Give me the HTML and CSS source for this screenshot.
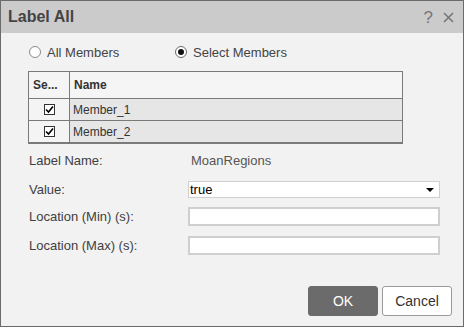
FILE: index.html
```html
<!DOCTYPE html>
<html>
<head>
<meta charset="utf-8">
<link rel="stylesheet" href="styles.css">
</head>
<body>
<div class="dialog">
  <div class="titlebar">
    <div class="title">Label All</div>
    <span class="help">?</span>
    <svg class="close" width="11" height="11" viewBox="0 0 11 11"><path d="M1 1 L10 10 M10 1 L1 10" stroke="#777" stroke-width="1.6" fill="none"/></svg>
  </div>
  <div class="content">
    <div class="radios">
      <label class="opt opt1"><span class="radio"></span><span>All Members</span></label>
      <label class="opt"><span class="radio on"></span><span>Select Members</span></label>
    </div>
    <div class="grid">
      <div class="row head">
        <div class="c1">Se...</div>
        <div class="c2">Name</div>
      </div>
      <div class="row item">
        <div class="c1"><span class="cb"><svg width="9" height="9" viewBox="0 0 9 9"><path d="M1 4.5 L3.5 7 L8 1.5" stroke="#000" stroke-width="1.6" fill="none"/></svg></span></div>
        <div class="c2">Member_1</div>
      </div>
      <div class="row item">
        <div class="c1"><span class="cb"><svg width="9" height="9" viewBox="0 0 9 9"><path d="M1 4.5 L3.5 7 L8 1.5" stroke="#000" stroke-width="1.6" fill="none"/></svg></span></div>
        <div class="c2">Member_2</div>
      </div>
    </div>
    <div class="form">
      <div class="lbl r1">Label Name:</div>
      <div class="val r1">MoanRegions</div>
      <div class="lbl r2">Value:</div>
      <div class="select r2"><span>true</span><span class="arrow"></span></div>
      <div class="lbl r3">Location (Min) (s):</div>
      <div class="input r3"></div>
      <div class="lbl r4">Location (Max) (s):</div>
      <div class="input r4"></div>
    </div>
  </div>
  <div class="footer">
    <button class="btn ok">OK</button>
    <button class="btn cancel">Cancel</button>
  </div>
</div>
</body>
</html>
```
FILE: styles.css
```css
html, body {
  margin: 0;
  padding: 0;
  background: #f2f2f2;
}
.dialog {
  width: 464px;
  height: 327px;
  box-sizing: border-box;
  border: 1px solid #6b6b6b;
  background: #f2f2f2;
  display: flex;
  flex-direction: column;
  font-family: "Liberation Sans", Arial, sans-serif;
  color: #404040;
}
.titlebar {
  height: 32px;
  flex: none;
  background: #cbcbcb;
  display: flex;
  align-items: center;
  padding: 0 9px 0 7px;
}
.title {
  flex: 1;
  font-size: 16px;
  font-weight: bold;
  color: #444;
}
.help {
  font-size: 17px;
  color: #777;
  margin-right: 10px;
  line-height: 1;
}
.close {
  display: block;
}
.content {
  padding-left: 27px;
}
.radios {
  display: flex;
  height: 20px;
  margin-top: 9px;
  padding-left: 1px;
  font-size: 13px;
  color: #444;
}
.opt {
  display: flex;
  align-items: center;
}
.opt1 {
  width: 146px;
}
.radio {
  width: 12px;
  height: 12px;
  box-sizing: border-box;
  border: 1px solid #8a8a8a;
  border-radius: 50%;
  background: #fff;
  margin-right: 6px;
  position: relative;
}
.radio.on {
  border-color: #6a6a6a;
}
.radio.on::after {
  content: "";
  position: absolute;
  left: 2px;
  top: 2px;
  width: 6px;
  height: 6px;
  border-radius: 50%;
  background: #111;
}
.grid {
  margin-top: 9px;
  width: 375px;
  box-sizing: border-box;
  border: 1px solid #7a7a7a;
  border-bottom-width: 2px;
  font-size: 12px;
  color: #333;
}
.row {
  display: flex;
}
.row + .row {
  border-top: 1px solid #7a7a7a;
}
.head {
  height: 26px;
  background: #f5f5f5;
  font-weight: bold;
}
.item {
  height: 21px;
}
.c1 {
  width: 36px;
  flex: none;
  border-right: 1px solid #7a7a7a;
  display: flex;
  align-items: center;
  padding-left: 4px;
  box-sizing: content-box;
}
.item .c1 {
  background: #f4f4f4;
  justify-content: center;
  padding-left: 2px;
  padding-right: 2px;
  width: 36px;
}
.c2 {
  flex: 1;
  display: flex;
  align-items: center;
  padding-left: 4px;
}
.item .c2 {
  background: #e6e6e6;
  padding-left: 3px;
}
.cb {
  width: 11px;
  height: 11px;
  box-sizing: border-box;
  border: 1px solid #333;
  background: #fff;
  display: flex;
  align-items: center;
  justify-content: center;
}
.form {
  margin-top: 6px;
  margin-left: 1px;
  display: grid;
  grid-template-columns: 159px 252px;
  grid-template-rows: 20px 17px 19px 19px;
  row-gap: 10px;
  font-size: 13px;
}
.form .r2 { margin-top: 1px; }
.lbl {
  display: flex;
  align-items: center;
  color: #404040;
}
.val {
  display: flex;
  align-items: center;
  padding-left: 3px;
  color: #555;
}
.select {
  box-sizing: border-box;
  height: 17px;
  border: 1px solid #cfcfcf;
  background: #fff;
  display: flex;
  align-items: center;
  justify-content: space-between;
  padding: 0 5px 0 1px;
  color: #000;
}
.arrow {
  width: 0;
  height: 0;
  border-left: 4px solid transparent;
  border-right: 4px solid transparent;
  border-top: 4px solid #000;
}
.input {
  box-sizing: border-box;
  height: 19px;
  border: 2px solid #cfcfcf;
  background: #fff;
}
.footer {
  margin-top: auto;
  display: flex;
  justify-content: flex-end;
  gap: 4px;
  padding: 0 11px 10px 0;
}
.btn {
  width: 70px;
  height: 30px;
  box-sizing: border-box;
  border-radius: 3px;
  font-family: "Liberation Sans", Arial, sans-serif;
  font-size: 14px;
  padding: 0;
}
.ok {
  background: #6b6b6b;
  border: 1px solid #6b6b6b;
  color: #fff;
}
.cancel {
  background: #fff;
  border: 1px solid #9a9a9a;
  color: #333;
}
```
